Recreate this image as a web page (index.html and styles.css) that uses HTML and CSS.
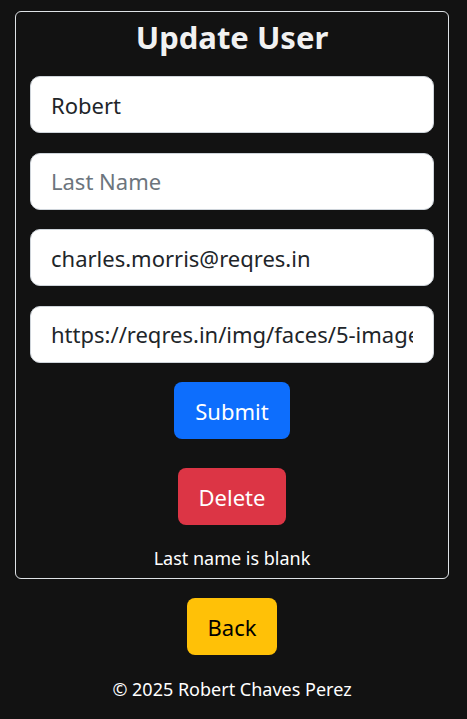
FILE: index.html
```html
<!DOCTYPE html>
<html lang="en">
<head>
<meta charset="utf-8">
<title>Update User</title>
<link rel="stylesheet" href="styles.css">
</head>
<body>
<main class="page">
  <section class="card">
    <h2 class="title">Update User</h2>
    <form class="form">
      <input class="field" type="text" value="Robert">
      <input class="field" type="text" placeholder="Last Name">
      <input class="field" type="email" value="charles.morris@reqres.in">
      <input class="field" type="text" value="https://reqres.in/img/faces/5-image.jpg">
      <button class="btn btn-blue" type="button">Submit</button>
      <button class="btn btn-red" type="button">Delete</button>
    </form>
    <p class="msg">Last name is blank</p>
  </section>
  <button class="btn btn-yellow" type="button">Back</button>
  <footer class="foot">© 2025 Robert Chaves Perez</footer>
</main>
</body>
</html>
```
FILE: styles.css
```css
html, body {
  margin: 0;
  background: #121212;
}
body {
  font-family: "Noto Sans", "Open Sans", sans-serif;
  color: #fff;
}
.page {
  padding: 11px 18px 0 15px;
  display: flex;
  flex-direction: column;
  align-items: center;
}
.card {
  box-sizing: border-box;
  width: 100%;
  border: 1px solid #dee2e6;
  border-radius: 6px;
  padding: 0 14px 6px;
  display: flex;
  flex-direction: column;
  align-items: center;
}
.title {
  margin: 6px 0 20px;
  font-size: 31px;
  line-height: 38px;
  font-weight: 700;
  color: #f1f1f1;
}
.form {
  width: 100%;
  display: flex;
  flex-direction: column;
  align-items: center;
}
.field {
  box-sizing: border-box;
  width: 100%;
  height: 57px;
  margin: 0 0 19.5px;
  padding: 0 20px;
  border: 1px solid #ced4da;
  border-radius: 10px;
  background: #fff;
  color: #212529;
  font-family: inherit;
  font-size: 22px;
}
.field::placeholder {
  color: #6c757d;
}
.btn {
  box-sizing: border-box;
  height: 57px;
  padding: 0 21px;
  border: 0;
  border-radius: 8px;
  font-family: inherit;
  font-size: 22px;
  color: #fff;
}
.btn-blue {
  background: #0d6efd;
  margin-bottom: 29px;
}
.btn-red {
  background: #dc3545;
}
.btn-yellow {
  background: #ffc107;
  color: #000;
  margin-top: 19px;
}
.msg {
  margin: 20px 0 0;
  font-size: 18px;
  line-height: 27px;
}
.foot {
  margin-top: 21px;
  font-size: 18px;
  line-height: 27px;
}
```
